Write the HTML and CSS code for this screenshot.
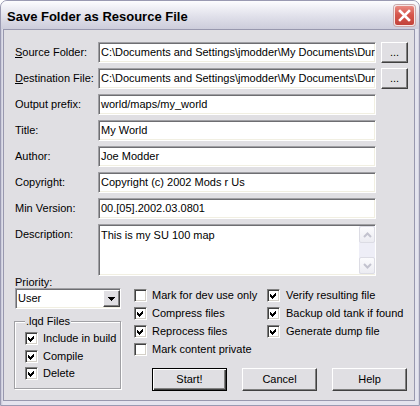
FILE: index.html
```html
<!DOCTYPE html>
<html>
<head>
<meta charset="utf-8">
<title>Save Folder as Resource File</title>
<link rel="stylesheet" href="styles.css">
</head>
<body>
<div class="window">
  <div class="titlebar">
    <span class="title">Save Folder as Resource File</span>
    <span class="close"><svg width="19" height="19" viewBox="0 0 19 19"><path d="M5 5 L14 14 M14 5 L5 14" stroke="#fff" stroke-width="2.6" stroke-linecap="square" fill="none"/></svg></span>
  </div>
  <div class="client">
    <div class="form">
      <span class="lbl"><u>S</u>ource Folder:</span>
      <div class="field">C:\Documents and Settings\jmodder\My Documents\Dur</div>
      <div class="btn browse">...</div>

      <span class="lbl"><u>D</u>estination File:</span>
      <div class="field">C:\Documents and Settings\jmodder\My Documents\Dur</div>
      <div class="btn browse">...</div>

      <span class="lbl">Output prefix:</span>
      <div class="field">world/maps/my_world</div>

      <span class="lbl">Title:</span>
      <div class="field">My World</div>

      <span class="lbl">Author:</span>
      <div class="field">Joe Modder</div>

      <span class="lbl">Copyright:</span>
      <div class="field">Copyright (c) 2002 Mods r Us</div>

      <span class="lbl">Min Version:</span>
      <div class="field">00.[05].2002.03.0801</div>

      <span class="lbl lbl-top">Description:</span>
      <div class="field area">
        <div class="area-text">This is my SU 100 map</div>
        <div class="vscroll">
          <div class="sbtn"><svg width="9" height="6" viewBox="0 0 9 6"><path d="M1 5 L4.5 1.5 L8 5" stroke="#c3c3cf" stroke-width="2" fill="none"/></svg></div>
          <div class="strack"></div>
          <div class="sbtn"><svg width="9" height="6" viewBox="0 0 9 6"><path d="M1 1 L4.5 4.5 L8 1" stroke="#c3c3cf" stroke-width="2" fill="none"/></svg></div>
        </div>
      </div>
    </div>

    <div class="bottom">
      <div class="left">
        <div class="prio-lbl">Priority:</div>
        <div class="select">
          <span class="sel-text">User</span>
          <span class="btn dd"><svg width="7" height="4" viewBox="0 0 7 4" shape-rendering="crispEdges"><path d="M0 0 H7 L3.5 4 Z" fill="#000"/></svg></span>
        </div>
        <fieldset class="group">
          <legend>.lqd Files</legend>
          <div class="cb"><span class="box"><svg width="11" height="11" viewBox="0 0 11 11" shape-rendering="crispEdges"><polygon points="2,4 4,6 8,2 8,5 4,9 2,7" fill="#000"/></svg></span>Include in build</div>
          <div class="cb"><span class="box"><svg width="11" height="11" viewBox="0 0 11 11" shape-rendering="crispEdges"><polygon points="2,4 4,6 8,2 8,5 4,9 2,7" fill="#000"/></svg></span>Compile</div>
          <div class="cb"><span class="box"><svg width="11" height="11" viewBox="0 0 11 11" shape-rendering="crispEdges"><polygon points="2,4 4,6 8,2 8,5 4,9 2,7" fill="#000"/></svg></span>Delete</div>
        </fieldset>
      </div>

      <div class="right">
        <div class="checks">
          <div class="cb"><span class="box"></span>Mark for dev use only</div>
          <div class="cb"><span class="box"><svg width="11" height="11" viewBox="0 0 11 11" shape-rendering="crispEdges"><polygon points="2,4 4,6 8,2 8,5 4,9 2,7" fill="#000"/></svg></span>Compress files</div>
          <div class="cb"><span class="box"><svg width="11" height="11" viewBox="0 0 11 11" shape-rendering="crispEdges"><polygon points="2,4 4,6 8,2 8,5 4,9 2,7" fill="#000"/></svg></span>Reprocess files</div>
          <div class="cb"><span class="box"></span>Mark content private</div>
          <div class="cb"><span class="box"><svg width="11" height="11" viewBox="0 0 11 11" shape-rendering="crispEdges"><polygon points="2,4 4,6 8,2 8,5 4,9 2,7" fill="#000"/></svg></span>Verify resulting file</div>
          <div class="cb"><span class="box"><svg width="11" height="11" viewBox="0 0 11 11" shape-rendering="crispEdges"><polygon points="2,4 4,6 8,2 8,5 4,9 2,7" fill="#000"/></svg></span>Backup old tank if found</div>
          <div class="cb"><span class="box"><svg width="11" height="11" viewBox="0 0 11 11" shape-rendering="crispEdges"><polygon points="2,4 4,6 8,2 8,5 4,9 2,7" fill="#000"/></svg></span>Generate dump file</div>
        </div>
        <div class="actions">
          <div class="btn push default">Start!</div>
          <div class="btn push">Cancel</div>
          <div class="btn push">Help</div>
        </div>
      </div>
    </div>
  </div>
</div>
</body>
</html>
```

FILE: styles.css
```css
* { box-sizing: border-box; }
html, body { margin: 0; padding: 0; background: #ffffff; }
body {
  font-family: "Liberation Sans", Arial, sans-serif;
  font-size: 11px;
  color: #000;
}

.window {
  width: 420px;
  height: 406px;
  display: flex;
  flex-direction: column;
  border: 1px solid #9a9ab2;
  border-radius: 7px 7px 0 0;
  background: linear-gradient(90deg, #c6c6d6, #e4e4ee 2px, #e4e4ee 417px, #c6c6d6);
  overflow: hidden;
}

.titlebar {
  flex: none;
  height: 28px;
  display: flex;
  align-items: center;
  justify-content: space-between;
  padding: 0 4px 0 6px;
  background: linear-gradient(#fdfdff 0%, #f2f2f7 20%, #e0e0ea 55%, #cdcddb 100%);
}
.title {
  font-weight: bold;
  font-size: 13px;
  padding-top: 3px;
  color: #000;
}
.close {
  width: 21px;
  height: 21px;
  border-radius: 3px;
  border: 1px solid #f6e6e6;
  background: linear-gradient(#e98b83, #d6574d 45%, #c2433a);
  box-shadow: 0 0 0 1px #c9a9aa;
  display: flex;
  align-items: center;
  justify-content: center;
  margin-top: 1px;
}

.client {
  flex: 1;
  margin: 0 4px 4px 2px;
  background: #e0dfe3;
  border: 1px solid #9898ae;
  padding: 12px 0 0 11px;
}

.form {
  display: grid;
  grid-template-columns: 83px 278px 32px;
  grid-template-rows: repeat(7, 21px) 52px;
  row-gap: 5px;
}
.lbl {
  grid-column: 1;
  align-self: center;
  white-space: nowrap;
  line-height: 13px;
}
.lbl-top { align-self: start; padding-top: 4px; }

.field {
  grid-column: 2;
  height: 21px;
  background: #fff;
  border: 1px solid;
  border-color: #a0a0a4 #ffffff #ffffff #a0a0a4;
  box-shadow: inset 1px 1px #6e6e72, inset -1px -1px #f1efe2;
  padding: 0 2px;
  line-height: 19px;
  white-space: nowrap;
  overflow: hidden;
}
.field.area {
  height: 52px;
  display: flex;
  padding: 1px 0 1px 2px;
  line-height: 13px;
}
.area-text { flex: 1; padding-top: 3px; }
.vscroll {
  width: 16px;
  flex: none;
  display: flex;
  flex-direction: column;
  background: #eeeef7;
}
.sbtn {
  height: 17px;
  flex: none;
  border: 1px solid #dcdce4;
  border-radius: 2px;
  background: linear-gradient(#fbfbfd, #ececf2);
  display: flex;
  align-items: center;
  justify-content: center;
}
.strack { flex: 1; }

.btn {
  background: #e0dfe3;
  border: 1px solid;
  border-color: #ffffff #404040 #404040 #ffffff;
  box-shadow: inset -1px -1px #808080;
  display: flex;
  align-items: center;
  justify-content: center;
}
.browse {
  grid-column: 3;
  margin-left: 5px;
  width: 27px;
  height: 21px;
  padding-bottom: 1px;
}

.bottom {
  display: grid;
  grid-template-columns: 107px 1fr;
  column-gap: 12px;
}
.prio-lbl { height: 12px; line-height: 12px; }

.select {
  width: 106px;
  height: 21px;
  background: #fff;
  border: 1px solid;
  border-color: #a0a0a4 #ffffff #ffffff #a0a0a4;
  box-shadow: inset 1px 1px #6e6e72, inset -1px -1px #f1efe2;
  display: flex;
  align-items: center;
  justify-content: space-between;
  padding-left: 2px;
}
.sel-text { line-height: 13px; }
.btn.dd {
  width: 17px;
  height: 17px;
}

.group {
  margin: 6px 0 0 -1px;
  width: 107px;
  padding: 2px 4px 5px 10px;
  border: 1px solid #a0a0a4;
  box-shadow: inset 1px 1px #fff, 1px 1px #fff;
  min-width: 0;
}
.group legend {
  padding: 0 1px;
  margin-left: 0;
  line-height: 13px;
  background: #e0dfe3;
}
.group .cb { height: 17.5px; }

.cb {
  display: flex;
  align-items: center;
  gap: 5px;
  white-space: nowrap;
  line-height: 13px;
}
.box {
  flex: none;
  width: 13px;
  height: 13px;
  background: #fff;
  border: 1px solid;
  border-color: #808080 #ffffff #ffffff #808080;
  box-shadow: inset 1px 1px #404040, inset -1px -1px #d4d0c8;
  display: block;
}
.box svg { display: block; }

.right { padding-top: 10px; }
.checks {
  display: grid;
  grid-template-columns: 133px 1fr;
  grid-template-rows: repeat(4, 18px);
  grid-auto-flow: column;
}
.checks .cb:nth-child(n+5) { gap: 6px; }

.actions {
  display: flex;
  gap: 15px;
  margin: 10px 0 0 18px;
}
.btn.push {
  width: 75px;
  height: 23px;
  line-height: 13px;
}
.btn.default {
  border: 1px solid #000;
  box-shadow: inset 1px 1px #fff, inset -1px -1px #404040, inset -2px -2px #808080;
}
```
